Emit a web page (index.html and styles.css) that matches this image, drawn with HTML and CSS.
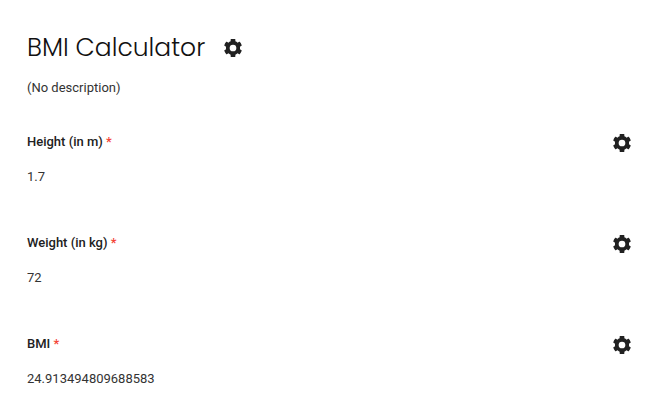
FILE: index.html
```html
<!DOCTYPE html>
<html lang="en">
<head>
  <meta charset="UTF-8">
  <meta name="viewport" content="width=device-width, initial-scale=1.0">
  <title>BMI Calculator</title>
  <link rel="stylesheet" href="styles.css">
</head>
<body>

<!-- Gear shape shared by all the settings buttons -->
<svg class="icon-defs" aria-hidden="true">
  <symbol id="gear" viewBox="-16 -16 544 544">
    <path d="M487.400 315.700l-42.600-24.600c4.300-23.200 4.300-47 0-70.200l42.600-24.600c4.900-2.800 7.100-8.600 5.500-14-11.100-35.600-30-67.800-54.700-94.600-3.800-4.100-10-5.100-14.800-2.300L380.800 110c-17.900-15.400-38.500-27.300-60.800-35.100V25.800c0-5.600-3.900-10.500-9.400-11.700-36.700-8.200-74.300-7.800-109.200 0-5.500 1.200-9.400 6.100-9.400 11.700V75c-22.200 7.900-42.800 19.800-60.800 35.100L88.700 85.500c-4.900-2.800-11-1.900-14.800 2.300-24.700 26.700-43.600 58.900-54.700 94.600-1.700 5.400.6 11.200 5.500 14L67.300 221c-4.300 23.200-4.300 47 0 70.200l-42.600 24.600c-4.900 2.800-7.100 8.600-5.500 14 11.100 35.600 30 67.800 54.700 94.600 3.800 4.100 10 5.100 14.800 2.300l42.600-24.600c17.900 15.400 38.500 27.300 60.800 35.100v49.200c0 5.600 3.900 10.500 9.400 11.700 36.700 8.200 74.300 7.800 109.200 0 5.500-1.200 9.400-6.100 9.400-11.700v-49.200c22.200-7.900 42.800-19.800 60.800-35.100l42.600 24.600c4.900 2.800 11 1.900 14.800-2.300 24.700-26.700 43.600-58.900 54.700-94.600 1.500-5.500-.7-11.300-5.600-14.100zM256 347a91 91 0 1 1 0-182 91 91 0 0 1 0 182z"/>
  </symbol>
</svg>

<main class="form-container">
  <header class="form-header">
    <h1 class="form-title">BMI Calculator</h1>
    <button type="button" class="settings-btn" aria-label="Form settings">
      <svg class="icon"><use href="#gear"/></svg>
    </button>
  </header>
  <p class="form-description">(No description)</p>

  <form class="fields">
    <div class="field">
      <div class="field-content">
        <label for="height" class="field-label">Height (in m) <span class="required">*</span></label>
        <input type="text" id="height" class="field-value" value="1.7" required>
      </div>
      <button type="button" class="settings-btn" aria-label="Height settings">
        <svg class="icon"><use href="#gear"/></svg>
      </button>
    </div>

    <div class="field">
      <div class="field-content">
        <label for="weight" class="field-label">Weight (in kg) <span class="required">*</span></label>
        <input type="text" id="weight" class="field-value" value="72" required>
      </div>
      <button type="button" class="settings-btn" aria-label="Weight settings">
        <svg class="icon"><use href="#gear"/></svg>
      </button>
    </div>

    <div class="field">
      <div class="field-content">
        <label for="bmi" class="field-label">BMI <span class="required">*</span></label>
        <output id="bmi" for="height weight" class="field-value">24.913494809688583</output>
      </div>
      <button type="button" class="settings-btn" aria-label="BMI settings">
        <svg class="icon"><use href="#gear"/></svg>
      </button>
    </div>
  </form>
</main>

</body>
</html>
```

FILE: styles.css
```css
body {
  font-family: Roboto, Arial, sans-serif;
  font-size: 13px;
  line-height: 20px;
  color: #333;
  background-color: #fff;
  margin: 0;
}

.icon-defs {
  display: none;
}

.form-container {
  padding: 32px 27px 0;
}

.form-header {
  display: flex;
  align-items: center;
  gap: 17px;
}

.form-title {
  margin: 0;
  font-family: Poppins, Inter, sans-serif;
  font-size: 25px;
  font-weight: 300;
  line-height: 32px;
  color: #111;
}

.form-description {
  margin: 14px 0 0;
}

.fields {
  display: flex;
  flex-direction: column;
  gap: 46px;
  margin-top: 34px;
}

.field {
  display: flex;
  justify-content: space-between;
  align-items: flex-start;
}

.field-content {
  display: flex;
  flex-direction: column;
  flex: 1;
  gap: 15px;
}

.field-label {
  font-weight: 500;
  color: #212121;
}

.required {
  color: #f44336;
}

.field-value {
  display: block;
  height: 20px;
  padding: 0;
  border: none;
  outline: none;
  background: none;
  font: inherit;
  color: inherit;
}

.settings-btn {
  display: flex;
  padding: 1px;
  border: none;
  background: none;
  color: #212121;
  cursor: pointer;
}

.icon {
  width: 20px;
  height: 20px;
  fill: currentColor;
}
```
